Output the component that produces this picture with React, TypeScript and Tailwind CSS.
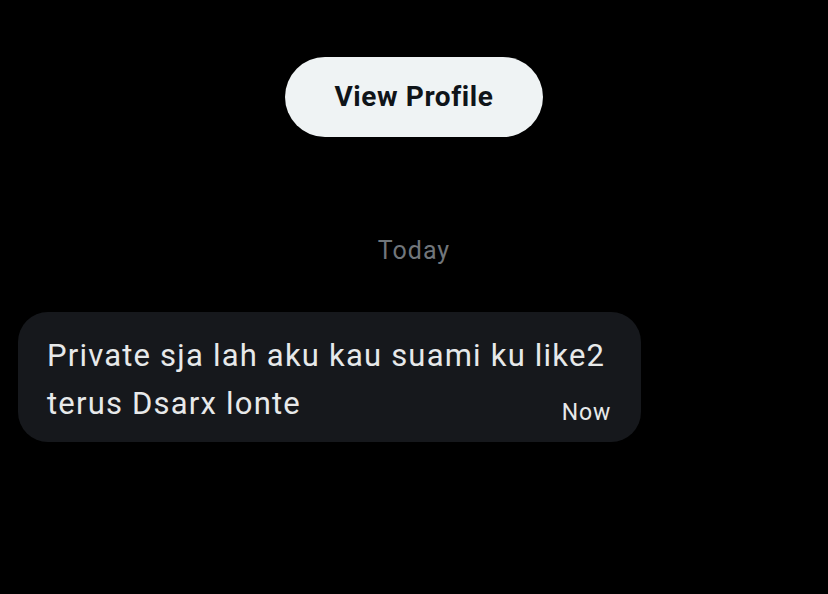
export default function App() {
  return (
    <div className="flex h-[594px] w-[828px] flex-col bg-black font-['Roboto',sans-serif]">
      <div className="flex justify-center pt-[57px]">
        <button className="h-[80px] w-[258px] rounded-full bg-[#eff3f4] text-[28px] font-bold tracking-[0.6px] text-[#0f1419]">
          View Profile
        </button>
      </div>

      <div className="mt-[99px] text-center text-[25px] leading-[30px] tracking-[1px] text-[#71767b]">Today</div>

      <div className="ml-[18px] mt-[46px] w-[623px] rounded-[30px] bg-[#16181c] pb-[16px] pl-[29px] pr-[30px] pt-[20px]">
        <p className="text-[31px] leading-[48px] tracking-[1.2px] text-[#e7e9ea]">
          Private sja lah aku kau suami ku like2
          <br />
          terus Dsarx lonte
        </p>
        <div className="-mt-[28px] text-right text-[23px] leading-[26px] tracking-[0.8px] text-[#e7e9ea]">Now</div>
      </div>
    </div>
  )
}
